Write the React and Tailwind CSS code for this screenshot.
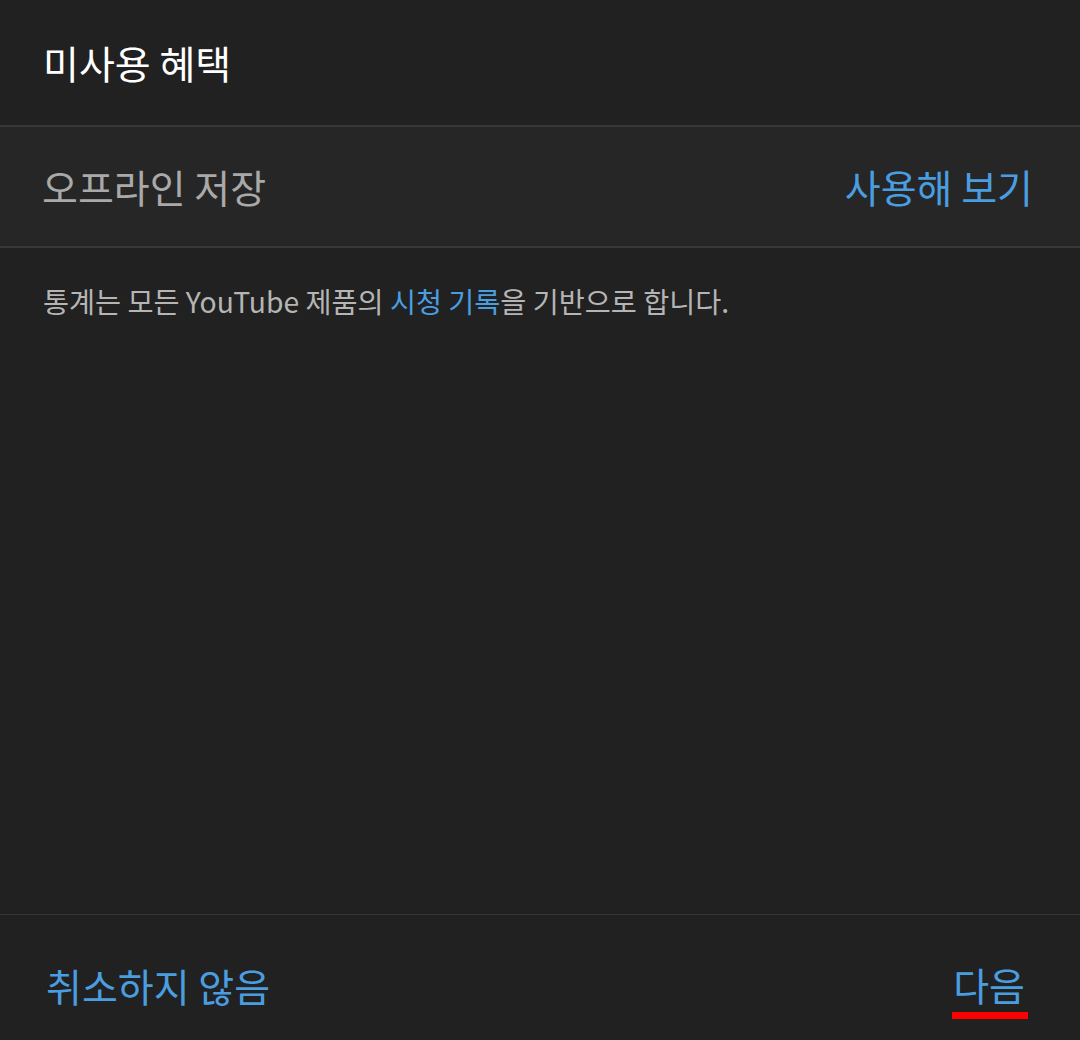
export default function App() {
  const font = { fontFamily: '"Noto Sans CJK KR", "Noto Sans", sans-serif' };
  return (
    <div className="w-[1080px] h-[1040px] bg-[#212121] flex flex-col overflow-hidden" style={font}>
      <div className="h-[125px] flex items-center px-[43px] shrink-0">
        <span className="text-[39px] text-white leading-none">미사용 혜택</span>
      </div>
      <div className="h-[123px] shrink-0 border-y-2 border-[#383838] bg-[#262626] flex items-center justify-between pl-[42px] pr-[47px]">
        <span className="text-[39px] text-[#a9a9a9] leading-none">오프라인 저장</span>
        <span className="text-[39px] text-[#4a9ee0] leading-none">사용해 보기</span>
      </div>
      <div className="flex-1 px-[43px] pt-[37px]">
        <p className="text-[28.3px] text-[#b5b5b5] leading-[32px]">
          통계는 모든 YouTube 제품의 <span className="text-[#4a9ee0]">시청 기록</span>을 기반으로 합니다.
        </p>
      </div>
      <div className="h-[126px] shrink-0 border-t border-[#363636] flex items-center justify-between pl-[46px] pr-[55px] pt-[16px]">
        <span className="text-[39px] text-[#4a9ee0] leading-none">취소하지 않음</span>
        <div className="relative">
          <span className="text-[39px] text-[#4a9ee0] leading-none">다음</span>
          <div className="absolute right-[-3px] top-[47px] w-[76px] h-[7px] bg-[#ff0000]" />
        </div>
      </div>
    </div>
  );
}
